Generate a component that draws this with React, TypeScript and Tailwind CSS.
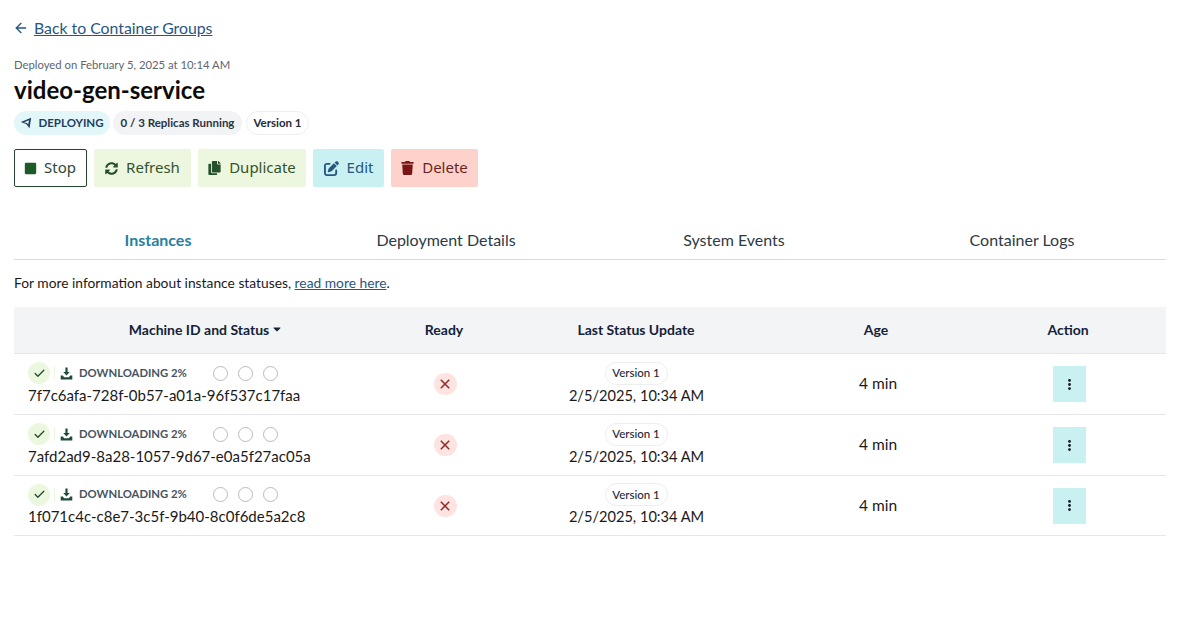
import React from "react";
import { FaSyncAlt, FaCopy, FaTrash, FaStop, FaCaretDown } from "react-icons/fa";
import { FaPenToSquare, FaEllipsisVertical } from "react-icons/fa6";
import { ArrowLeft, Check } from "lucide-react";

const rows = [
  "7f7c6afa-728f-0b57-a01a-96f537c17faa",
  "7afd2ad9-8a28-1057-9d67-e0a5f27ac05a",
  "1f071c4c-c8e7-3c5f-9b40-8c0f6de5a2c8",
];
const grid = "grid grid-cols-[384px_92px_292px_188px_196px]";

function Btn({ icon, label, cls }: { icon: React.ReactNode; label: string; cls: string }) {
  return (
    <div className={`h-[38px] flex items-center justify-center gap-[8px] rounded-[2px] text-[15px] ${cls}`} style={{ fontFamily: "'Noto Sans', sans-serif" }}>
      {icon}
      <span className="pb-[2px]">{label}</span>
    </div>
  );
}

function Row({ id, h }: { id: string; h: string }) {
  return (
    <div className={`${grid} ${h} border-b border-[#e5e7eb] items-center text-[#1a1a1a]`}>
      <div className="pl-[14px] pb-[2px] flex flex-col">
        <div className="flex items-center h-[23px]">
          <span className="w-[22px] h-[22px] rounded-full bg-[#ecf7df] flex items-center justify-center">
            <Check className="text-[#1f4d2b] w-[13px] h-[13px]" strokeWidth={2.4} />
          </span>
          <span className="w-px h-[14px] bg-[#ecf7df] ml-[4px] mr-[5px]" />
          <svg width="13" height="13" viewBox="0 0 13 13" fill="#1f4d3a" className="mr-[6px]">
            <path d="M5.4 0.5h2.2v4.4h2.2L6.5 8.6 3.2 4.9h2.2z" />
            <path d="M0.7 8.6h2l1.5 1.7h4.6l1.5-1.7h2V12.5H0.7z" />
          </svg>
          <span className="text-[11.3px] font-bold text-[#46545f] w-[134px] whitespace-nowrap">DOWNLOADING 2%</span>
          <span className="flex gap-[10px]">
            <span className="w-[15px] h-[15px] rounded-full border border-[#b6bcc2]" />
            <span className="w-[15px] h-[15px] rounded-full border border-[#b6bcc2]" />
            <span className="w-[15px] h-[15px] rounded-full border border-[#b6bcc2]" />
          </span>
        </div>
        <div className="text-[15px] leading-[20px]">{id}</div>
      </div>
      <div className="flex justify-center pl-[2px]">
        <span className="w-[23px] h-[22px] rounded-full bg-[#fde4e1] flex items-center justify-center">
          <svg width="10" height="10" viewBox="0 0 10 10" stroke="#8f2a2a" strokeWidth="1.5" fill="none"><path d="M0.8 0.8 9.2 9.2M9.2 0.8 0.8 9.2" /></svg>
        </span>
      </div>
      <div className="flex flex-col items-center">
        <span className="inline-flex items-center justify-center h-[23px] w-[63px] rounded-full border border-[#eceef0] text-[11.5px] font-medium text-[#1f2937] bg-white">Version 1</span>
        <span className="text-[14.6px] leading-[22px] pl-[1px]">2/5/2025, 10:34 AM</span>
      </div>
      <div className="text-center text-[15.5px] pl-[4px]">4 min</div>
      <div className="flex justify-center pl-[2px]">
        <span className="w-[33px] h-[36px] bg-[#c9f1f1] flex items-center justify-center">
          <FaEllipsisVertical className="w-[13px] h-[13px] text-[#111827]" />
        </span>
      </div>
    </div>
  );
}

export default function App() {
  return (
    <div className="w-[1195px] h-[617px] bg-white overflow-hidden pl-[14px] pr-[29px] pt-[18px]" style={{ fontFamily: "Lato, sans-serif" }}>
      <div className="flex items-center h-[20px] text-[#27567f] text-[15.8px]">
        <ArrowLeft className="w-[16px] h-[16px] mr-[5px] -ml-[1px]" strokeWidth={2} />
        <span className="underline">Back to Container Groups</span>
      </div>
      <div className="mt-[20px] text-[11.3px] leading-[14px] text-[#5b6670]">Deployed on February 5, 2025 at 10:14 AM</div>
      <div className="mt-[3px] text-[24px] leading-[29px] font-bold text-[#0b0b0b]">video-gen-service</div>
      <div className="mt-[7px] flex items-center gap-[3px] h-[24px]">
        <span className="h-[24px] w-[96px] rounded-full bg-[#e3f6f8] flex items-center justify-center gap-[6px] text-[11.5px] font-bold text-[#1d3f66]">
          <svg width="12" height="12" viewBox="0 0 12 12" fill="#1d3f66" fillRule="evenodd"><path d="M0.8 5 11.2 0.8 9.5 11.2 6.2 7zM4 5.2 9 3.2 8.2 7.5 7 6z" /></svg>
          DEPLOYING
        </span>
        <span className="h-[24px] w-[129px] rounded-full bg-[#f2f3f4] flex items-center justify-center text-[11.5px] font-bold text-[#2b3440]">0 / 3 Replicas Running</span>
        <span className="ml-[1px] h-[24px] w-[63px] rounded-full border border-[#eceef0] flex items-center justify-center text-[11.5px] font-bold text-[#1f2937]">Version 1</span>
      </div>
      <div className="mt-[14px] flex gap-[7px]">
        <Btn cls="w-[73px] border border-[#24452c] text-[#2e4a34] bg-white" icon={<FaStop className="w-[13px] h-[13px] text-[#1e5a28] -mx-[1px]" />} label="Stop" />
        <Btn cls="w-[97px] bg-[#edf7df] text-[#35532b]" icon={<FaSyncAlt className="w-[13px] h-[13px] text-[#26502b]" />} label="Refresh" />
        <Btn cls="w-[108px] bg-[#edf7df] text-[#35532b]" icon={<FaCopy className="w-[13px] h-[14px] text-[#26502b]" />} label="Duplicate" />
        <Btn cls="w-[71px] bg-[#c9f1f1] text-[#27567f]" icon={<FaPenToSquare className="w-[15px] h-[15px] text-[#27567f]" />} label="Edit" />
        <Btn cls="w-[87px] bg-[#fdd2cb] text-[#6e1f22]" icon={<FaTrash className="w-[13px] h-[14px] text-[#7a1515]" />} label="Delete" />
      </div>
      <div className="mt-[34px] grid grid-cols-4 h-[39px] border-b border-[#d9dcdf] text-[16px]">
        <div className="flex justify-center items-center font-bold text-[#27809d]">Instances</div>
        <div className="flex justify-center items-center text-[#2d3a45]">Deployment Details</div>
        <div className="flex justify-center items-center text-[#2d3a45]">System Events</div>
        <div className="flex justify-center items-center text-[#2d3a45]">Container Logs</div>
      </div>
      <div className="mt-[13px] text-[13.8px] leading-[20px] text-[#1a1a1a]">
        For more information about instance statuses, <span className="underline text-[#27567f]">read more here</span>.
      </div>
      <div className={`${grid} mt-[14px] h-[47px] pb-[2px] bg-[#f2f4f6] border-b border-[#e5e7eb] items-center text-[14px] font-bold text-[#13233a] text-center`}>
        <div className="flex items-center justify-center gap-[2px]">Machine ID and Status <FaCaretDown className="w-[12px] h-[12px]" /></div>
        <div>Ready</div>
        <div>Last Status Update</div>
        <div>Age</div>
        <div>Action</div>
      </div>
      {rows.map((id, i) => (
        <Row key={id} id={id} h={i === 2 ? "h-[60px]" : "h-[61px]"} />
      ))}
    </div>
  );
}
